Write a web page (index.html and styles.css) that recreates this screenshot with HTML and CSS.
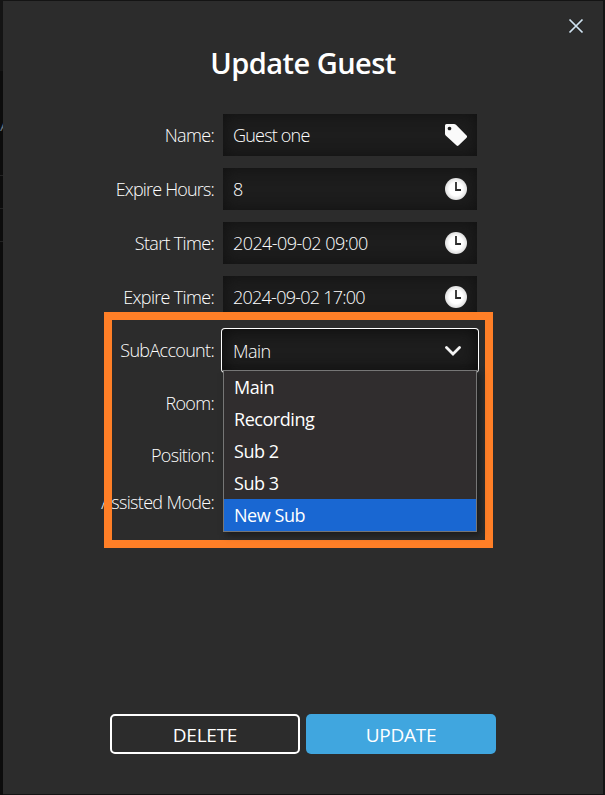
FILE: index.html
```html
<!DOCTYPE html>
<html lang="en">
<head>
<meta charset="utf-8">
<title>Update Guest</title>
<link rel="stylesheet" href="styles.css">
</head>
<body>
<svg class="defs" width="0" height="0" aria-hidden="true">
  <defs>
    <radialGradient id="shade"><stop offset=".6" stop-color="#fff"/><stop offset="1" stop-color="#dedede"/></radialGradient>
    <symbol id="clock" viewBox="0 0 22 22">
      <circle cx="11" cy="11" r="11" fill="url(#shade)"/>
      <path d="M11 4v8h5" fill="none" stroke="#2c2c2c" stroke-width="1.8"/>
    </symbol>
  </defs>
</svg>
<div class="backdrop"><span class="behind">A</span></div>
<main class="dialog">
  <button class="close" aria-label="Close"><svg width="16" height="16" viewBox="0 0 16 16"><path d="M1.500 1.500l13 13M14.500 1.500l-13 13"/></svg></button>
  <h1><span>Update Guest</span></h1>
  <form class="form">
    <div class="row"><label>Name:</label><div class="field"><span class="name">Guest one</span>
      <svg class="icon" viewBox="0 0 22 22"><path fill="#fafafa" fill-rule="evenodd" d="M1.500 0H9Q10 0 11 .8L22 12Q22.300 13 21.600 13.700L13.500 21.500Q12.500 22.300 11.600 21.500L.7 11.500Q0 10.800 0 9.700V1.500Q0 0 1.500 0ZM4.500 2.700a1.800 1.800 0 1 0 .01 0Z"/></svg></div></div>
    <div class="row"><label class="hours">Expire Hours:</label><div class="field"><span>8</span><svg class="icon"><use href="#clock"/></svg></div></div>
    <div class="row"><label>Start Time:</label><div class="field"><span>2024-09-02 09:00</span><svg class="icon"><use href="#clock"/></svg></div></div>
    <div class="row"><label>Expire Time:</label><div class="field"><span class="end">2024-09-02 17:00</span><svg class="icon"><use href="#clock"/></svg></div></div>
    <div class="row account"><label>SubAccount:</label>
      <div class="field select"><span>Main</span><svg class="chevron" viewBox="0 0 16 10"><path d="M1.500 1.500L8 8l6.500-6.500"/></svg>
        <ul class="menu"><li>Main</li><li>Recording</li><li>Sub 2</li><li>Sub 3</li><li class="active">New Sub</li></ul>
      </div></div>
    <div class="row short"><label>Room:</label></div>
    <div class="row short"><label>Position:</label></div>
    <div class="row mode"><label>Assisted Mode:</label></div>
  </form>
  <footer class="actions"><button class="button outline">DELETE</button><button class="button primary">UPDATE</button></footer>
  <div class="highlight"></div>
</main>
</body>
</html>
```
FILE: styles.css
```css
* { box-sizing: border-box; }
body { margin: 0; width: 605px; height: 795px; overflow: hidden; position: relative; background: #141414; color: #fff; font-family: "Open Sans", "Noto Sans", sans-serif; font-size: 18px; padding: 1px 2px 1px 3px; }
.defs { position: absolute; }
.backdrop { position: absolute; left: 0; top: 71px; width: 3px; height: 724px; overflow: hidden; background: linear-gradient(#222, #222) 0 104px / 3px 1px no-repeat, linear-gradient(#222, #222) 0 137px / 3px 1px no-repeat, linear-gradient(#222, #222) 0 170px / 3px 1px no-repeat, #0c0c0c; }
.behind { position: absolute; left: 0; top: 46px; font-size: 15px; line-height: 16px; color: #687580; }
.dialog { position: relative; height: 793px; background: #2c2c2c; display: flex; flex-direction: column; }
.close { position: absolute; right: 19px; top: 17px; width: 16px; height: 16px; padding: 0; border: 0; background: none; }
.close svg { display: block; fill: none; stroke: #d0e3f1; stroke-width: 1.7; }
h1 { margin: 0; padding-top: 42px; height: 113px; text-align: center; font-size: 29px; line-height: 40px; font-weight: 650; letter-spacing: -.55px; }
.form { display: flex; flex-direction: column; gap: 12px; width: 474px; }
.row { display: flex; align-items: center; height: 42px; gap: 8px; }
label { width: 212px; padding-right: 1px; flex: none; display: flex; justify-content: flex-end; white-space: nowrap; font-weight: 340; line-height: 24px; letter-spacing: -.68px; }
.hours { letter-spacing: -.83px; }
.field { width: 254px; height: 42px; flex: none; display: flex; align-items: center; justify-content: space-between; position: relative; padding: 0 10px; background: #1d1d1d; box-shadow: inset 0 0 15px #111; font-weight: 340; letter-spacing: -.57px; }
.name { letter-spacing: -.8px; }
.end { letter-spacing: -.75px; }
.icon { width: 22px; height: 22px; }
.account { height: 42px; margin-top: -1px; }
.select { height: 41px; box-shadow: inset 0 0 15px #0c0c0c, 0 0 0 1px #111, 0 0 0 2px #fff; border-radius: 2px; }
.chevron { width: 16px; height: 10px; margin-right: 6px; fill: none; stroke: #f4f4f4; stroke-width: 2.800; stroke-linecap: round; }
.account .select { margin-top: 1px; }
.short { height: 40px; }
.mode { height: 30px; }
.short label, .mode label { margin-top: -1px; }
.menu { position: absolute; z-index: 2; left: 0; top: 40px; width: 254px; margin: 0; padding: 0; list-style: none; background: #302d2e; border: 1px solid #767676; box-shadow: 3px 3px 6px #1b1b1b; font-weight: 400; letter-spacing: -.45px; }
.menu li { height: 32px; line-height: 33px; padding-left: 10px; }
.menu .active { background: #1967d2; }
.actions { display: flex; gap: 6px; margin: auto auto 40px 107px; }
.button { width: 190px; height: 40px; padding: 2px 0 0; border: 0; border-radius: 5px; color: #fff; font: 400 19px "Open Sans", sans-serif; letter-spacing: -.25px; }
.outline { border: 2px solid #fff; background: transparent; }
.primary { background: #40a6df; }
.highlight { position: absolute; left: 101px; top: 311px; width: 389px; height: 236px; border: 8px solid #ff7f27; pointer-events: none; }
```
